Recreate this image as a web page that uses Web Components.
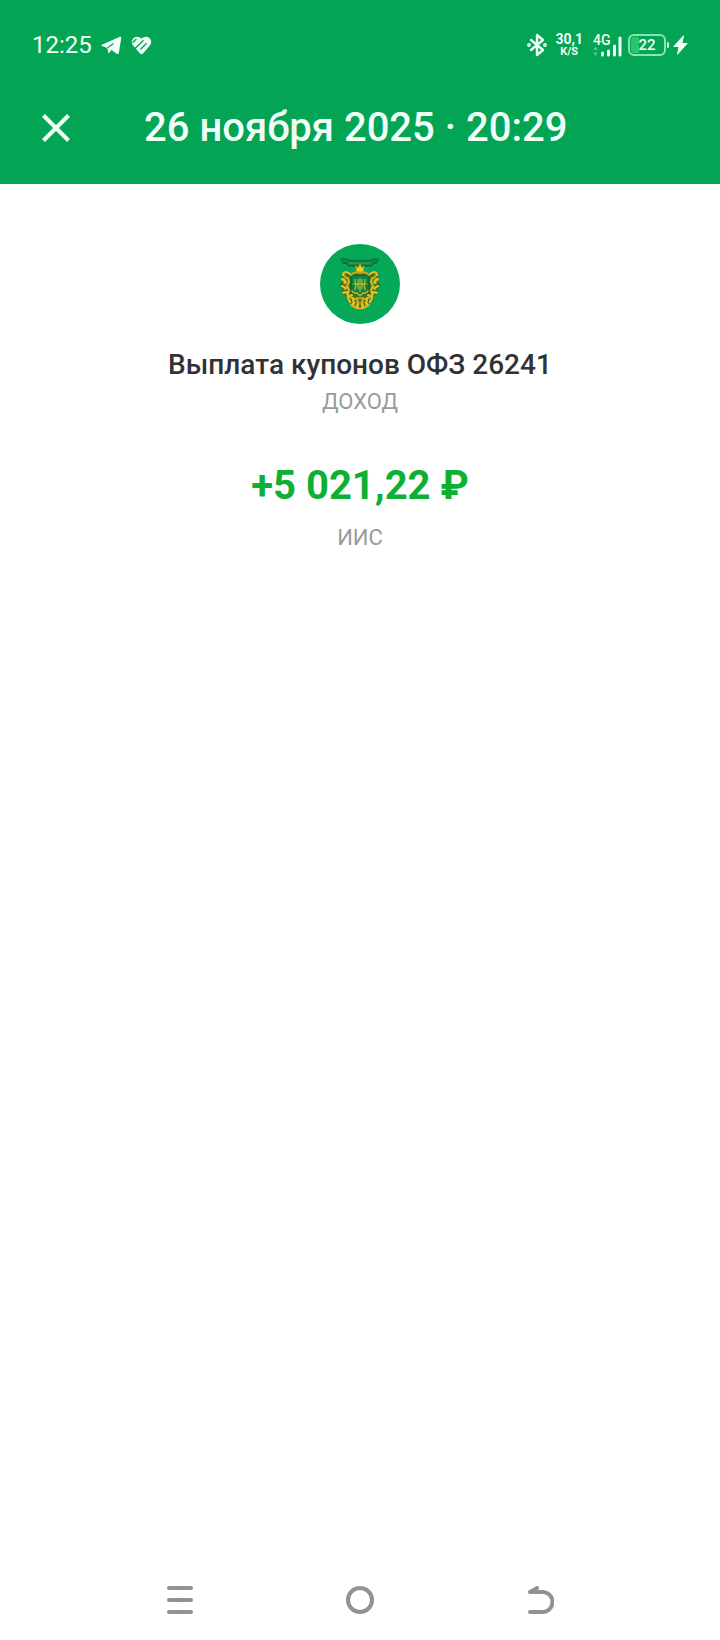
<!DOCTYPE html>
<html lang="ru">
<head>
<meta charset="utf-8">
<meta name="viewport" content="width=device-width, initial-scale=1">
<title>Выплата купонов</title>
<style>
  html, body { margin: 0; background: #fff; }
  body { font-family: Roboto, "Liberation Sans", sans-serif; color: #303234; }
</style>
</head>
<body>
<operation-screen>
  <status-bar slot="top"></status-bar>
  <app-bar slot="top">26 ноября 2025 · 20:29</app-bar>
  <operation-details>
    <bond-logo slot="logo"></bond-logo>
    <span slot="name">Выплата купонов ОФЗ 26241</span>
    <span slot="kind">ДОХОД</span>
    <span slot="amount">+5 021,22 ₽</span>
    <span slot="account">ИИС</span>
  </operation-details>
  <system-nav slot="bottom"></system-nav>
</operation-screen>

<script>
class ShadowElement extends HTMLElement {
  constructor() {
    super();
    this.attachShadow({ mode: 'open' }).innerHTML = this.constructor.markup;
  }
}

customElements.define('operation-screen', class extends ShadowElement {
  static markup = `
    <style>
      :host { display: flex; flex-direction: column; min-height: 100vh; }
      header { background: #03a554; color: #f0fff7; }
      main { flex: 1; }
    </style>
    <header><slot name="top"></slot></header>
    <main><slot></slot></main>
    <slot name="bottom"></slot>`;
});

customElements.define('status-bar', class extends ShadowElement {
  static markup = `
    <style>
      :host { display: flex; align-items: center; justify-content: space-between;
              height: 54px; padding: 18px 32px 0 32px; }
      .group { display: flex; align-items: center; }
      .left { gap: 9px; }
      svg { display: block; }
      time { font-size: 24px; line-height: 28px; }
      .rate { display: flex; flex-direction: column; align-items: center; margin: 0 10px 0 8px;
              font-size: 14px; line-height: 13px; font-weight: 700; }
      .rate small { font-size: 11px; line-height: 12px; }
      .net { display: grid; margin-right: 6px; }
      .net > * { grid-area: 1 / 1; }
      .net span { font-size: 14px; line-height: 12px; font-weight: 500; }
      .battery { box-sizing: border-box; width: 38px; height: 22px; border: 2px solid #8ce2b2; border-radius: 6px;
                 background: linear-gradient(90deg, #27c86b 8px, transparent 8px) content-box; padding: 1px;
                 font-size: 15px; line-height: 16px; font-weight: 500; text-align: center; }
      .cap { width: 2px; height: 6px; margin: 0 4px 0 1px; background: #c4f3d8; border-radius: 1px; }
    </style>
    <div class="group left">
      <time>12:25</time>
      <svg width="21" height="19" viewBox="0 0 21 19" fill="currentColor" aria-hidden="true">
        <path d="M.8 8.7 19 .8q1.600-.6 1.300 1.100l-2.500 15q-.5 1.900-2.200.8L10.500 14l-2.300 2.800q-.8.800-1-.3L6.300 12 .9 10.100q-1.100-.6-.1-1.400Z"/>
        <path d="m6.500 11.800 6-4.300" stroke="#03a554" stroke-width="1.200"/>
      </svg>
      <svg width="21" height="19" viewBox="0 0 21 19" aria-hidden="true">
        <path d="M10.500 2.800C8.500.3 5 .1 2.900 1.800.3 4 .2 7.400 2.300 9.800l6.500 7.500q1.700 1.700 3.400 0l6.500-7.500c2.100-2.400 2-5.800-.6-8-2.100-1.700-5.600-1.500-7.600 1Z" fill="currentColor"/>
        <path d="m1.500 6.800 4-4M4 12.500l8.500-8.300M9.500 13.500l6-6.200" fill="none" stroke="#03a554" stroke-width="1.400"/>
      </svg>
    </div>
    <div class="group">
      <svg width="20" height="24" viewBox="0 0 20 24" fill="none" stroke="currentColor" stroke-width="2.400" stroke-linejoin="round" stroke-linecap="round" aria-label="Bluetooth" role="img">
        <path d="m4 7 12 10-6 5V2l6 5L4 17"/>
        <circle cx="2" cy="12" r=".7"/><circle cx="18" cy="12" r=".7"/>
      </svg>
      <div class="rate"><span>30,1</span><small>K/S</small></div>
      <div class="net">
        <svg width="29" height="23" viewBox="0 0 29 23" fill="none" aria-hidden="true">
          <path d="M9.500 21v-2M15.500 21v-4M21.500 21v-9M27 21V4" stroke="currentColor" stroke-width="3" stroke-linecap="round"/>
          <path d="m0 16 2.500-3.500L5 16Zm0 2.500L2.500 22 5 18.500Z" fill="#4dcd83"/>
        </svg>
        <span>4G</span>
      </div>
      <div class="battery">22</div>
      <div class="cap"></div>
      <svg width="15" height="20" viewBox="0 0 15 20" fill="currentColor" stroke="currentColor" stroke-linejoin="round" aria-hidden="true">
        <path d="M10.500.8.800 11.500h5.400L4.500 19.200 14.200 8.500H8.800Z"/>
      </svg>
    </div>`;
});

customElements.define('app-bar', class extends ShadowElement {
  static markup = `
    <style>
      :host { display: flex; align-items: center; height: 112px; padding: 0 32px; gap: 64px; }
      button { display: flex; align-items: center; justify-content: center; width: 48px; height: 48px;
               margin: 0; padding: 0; border: 0; background: none; color: inherit; }
      h1 { margin: 0; font-size: 40px; line-height: 48px; font-weight: 500; white-space: nowrap; }
    </style>
    <button type="button" aria-label="Закрыть">
      <svg width="28" height="28" viewBox="0 0 28 28" fill="none" stroke="currentColor" stroke-width="4" aria-hidden="true">
        <path d="m1.500 1.500 25 25m0-25-25 25"/>
      </svg>
    </button>
    <h1><slot></slot></h1>`;
});

customElements.define('bond-logo', class extends ShadowElement {
  static markup = `
    <style>
      :host { display: block; width: 80px; height: 80px; }
      svg { display: block; }
    </style>
    <svg width="80" height="80" viewBox="0 0 80 80" fill="none" stroke-linecap="round" stroke-linejoin="round" role="img" aria-label="Герб">
      <circle cx="40" cy="40" r="40" fill="#04a857"/>
      <path d="M22 15.500h36l-2 4-4 1-4 2H32l-4-2-4-1Z" fill="#0b8a49"/>
      <path d="M21.500 15h5l3 2h21l3-2h5l-2 4.500-3-.5-2 3H28.500l-2-3-3 .5Z" stroke="#0a6238"/>
      <path d="M29 19h22" stroke="#6fae3f" stroke-width="1.200" stroke-dasharray="1 1.500"/>
      <path d="M25 28q-4 2-4 6l1 3-2 4 2 4-1 5 5 2 1 5 4 1 2 4 4 1 3 2 3-2 4-1 2-4 4-1 1-5 5-2-1-5 2-4-2-4 1-3q0-4-4-6l-5 2H30Z" fill="#3a7a25"/>
      <g stroke="#e3bd1e" stroke-width="2.200">
        <path d="M30 30q-6-4-7 1l3 3-4 1 4 3-4 4 4 2-3 5 4-1 1 5 4-2M50 30q6-4 7 1l-3 3 4 1-4 3 4 4-4 2 3 5-4-1-1 5-4-2"/>
        <path d="m28 54 2 4 3-4v7l4-5v8l3-7 3 7v-8l4 5v-7l3 4 2-4"/>
        <path d="M29 52q5 5 9 2h4q4 3 9-2M31 61q9 7 18 0" stroke-width="1.600"/>
        <path d="m28 34 1 4-2 4 2 4-1 4m24-16-1 4 2 4-2 4 1 4" stroke-width="1.800"/>
      </g>
      <path d="m23 33 2 1m-4 6 4 1m-2 6 3-1m31-13-2 1m4 6-4 1m2 6-3-1M31 55l1 3m4-2v4m4-4v6m4-6v4m5-5-1 3M27 30l2 2m24-2-2 2" stroke="#28461b"/>
      <path d="M31 31h18v16q0 3-3 3h-3l-3 3-3-3h-3q-3 0-3-3Z" fill="#078144" stroke="#1d5b2c" stroke-width="1.200"/>
      <path d="M32 47q1 3 5 2l3 3 3-3q4 1 5-2" stroke="#d7b51f" stroke-width="1.400"/>
      <path d="M35 35v3q2 3 0 6v2m10-11v3q-2 3 0 6v2m-7-11v10m4-10v10m-9-5h14m-7-5v13" stroke="#c9c432" stroke-width="1.100"/>
      <path d="M31 31q4-4 9-2 5-2 9 2" stroke="#d3a719" stroke-width="2"/>
      <path d="m36 22 2 2 2-4 2 4 2-2-1 6h-6Z" fill="#f2cd29" stroke="#c99d18"/>
    </svg>`;
});

customElements.define('operation-details', class extends ShadowElement {
  static markup = `
    <style>
      :host { display: flex; flex-direction: column; align-items: center; padding: 60px 32px; text-align: center; }
      h2, p { margin: 0; }
      h2 { margin-top: 24px; font-size: 28px; line-height: 34px; font-weight: 500; }
      .muted { font-size: 22px; line-height: 32px; color: #989b9c; }
      .kind { margin-top: 4px; }
      .amount { margin: 44px 0 12px; font-size: 40px; line-height: 48px; font-weight: 700; color: #0eb034; }
    </style>
    <slot name="logo"></slot>
    <h2><slot name="name"></slot></h2>
    <p class="muted kind"><slot name="kind"></slot></p>
    <p class="amount"><slot name="amount"></slot></p>
    <p class="muted"><slot name="account"></slot></p>`;
});

customElements.define('system-nav', class extends ShadowElement {
  static markup = `
    <style>
      :host { display: grid; grid-template-columns: repeat(3, 1fr); height: 80px; padding: 0 12.5%; }
      button { display: flex; align-items: center; justify-content: center; margin: 0; padding: 0;
               border: 0; background: none; color: #929292; }
    </style>
    <button type="button" aria-label="Недавние">
      <svg width="28" height="28" viewBox="0 0 28 28" fill="none" stroke="currentColor" stroke-width="4" stroke-linecap="round">
        <path d="M3 2h22M3 14h22M3 26h22"/>
      </svg>
    </button>
    <button type="button" aria-label="Домой">
      <svg width="28" height="28" viewBox="0 0 28 28" fill="none" stroke="currentColor" stroke-width="4">
        <circle cx="14" cy="14" r="12"/>
      </svg>
    </button>
    <button type="button" aria-label="Назад">
      <svg width="28" height="28" viewBox="0 0 28 28" fill="none" stroke="currentColor" stroke-width="4" stroke-linecap="round" stroke-linejoin="round">
        <path d="M11 2 4 6h12.500a10 10 0 0 1 0 20H4"/>
      </svg>
    </button>`;
});
</script>
</body>
</html>
